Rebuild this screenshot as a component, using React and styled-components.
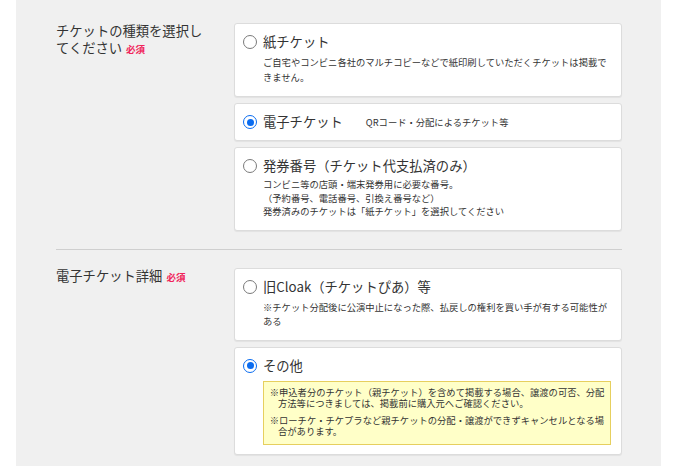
import React from "react";
import styled, { createGlobalStyle } from "styled-components";

const Global = createGlobalStyle`
  html, body { margin: 0; padding: 0; background: #fff; }
  body {
    font-family: "Noto Sans CJK JP", "Noto Sans", sans-serif;
    color: #333;
  }
`;

const Page = styled.div`
  display: flex;
  min-height: 466px;
  background: #fff;
`;

const Panel = styled.div`
  margin-left: 16px;
  width: 645px;
  min-height: 466px;
  background: #f0f0f0;
  box-sizing: border-box;
  padding: 23px 39px 0 40px;
`;

const Section = styled.section`
  display: grid;
  grid-template-columns: 178px 388px;
  align-items: start;
`;

const Label = styled.div`
  width: 150px;
  font-size: 13.3px;
  line-height: 16.6px;
  color: #333;
`;

const Required = styled.span`
  display: inline-block;
  margin-left: 4px;
  font-size: 9.5px;
  line-height: 10px;
  font-weight: 700;
  color: #f0245a;
  vertical-align: 0px;
`;

const Options = styled.div`
  display: flex;
  flex-direction: column;
  gap: 6px;
`;

const Card = styled.label`
  display: block;
  box-sizing: border-box;
  background: #fff;
  border: 1px solid #dcdcdc;
  border-radius: 3px;
  box-shadow: 0 1px 1px rgba(0, 0, 0, 0.06);
  padding: 9px 10px ${(p) => (p.$compact ? "9px" : "11px")} 8px;
`;

const TitleRow = styled.div`
  display: flex;
  align-items: center;
  height: 18px;
`;

const Radio = styled.span`
  flex: none;
  box-sizing: border-box;
  width: 14px;
  height: 14px;
  border-radius: 50%;
  border: ${(p) => (p.$checked ? "1.6px solid #0a6cf0" : "1.3px solid #7a7a7a")};
  background: #fff;
  margin-right: 6px;
  display: flex;
  align-items: center;
  justify-content: center;
  &::after {
    content: "";
    display: ${(p) => (p.$checked ? "block" : "none")};
    width: 7px;
    height: 7px;
    border-radius: 50%;
    background: #0a6cf0;
  }
`;

const Title = styled.span`
  font-size: 13.3px;
  line-height: 18px;
  color: #333;
  white-space: nowrap;
`;

const Note = styled.span`
  margin-left: 23px;
  font-size: 9.3px;
  color: #333;
  white-space: nowrap;
`;

const Desc = styled.div`
  margin: ${(p) => p.$mt || 4}px 0 0 20px;
  font-size: 9.3px;
  line-height: ${(p) => p.$lh || 15}px;
  color: #333;
`;

const Notice = styled.div`
  margin: 6px 0 0 19.7px;
  box-sizing: border-box;
  background: #ffffc8;
  border: 1px solid #e6cf5e;
  padding: 5px 4px 6.5px 6px;
  display: flex;
  flex-direction: column;
  gap: 5.7px;
`;

const NoticeLine = styled.p`
  margin: 0;
  padding-left: 8.3px;
  text-indent: -8.3px;
  font-size: 9.3px;
  line-height: 11.3px;
  color: #333;
`;

const Divider = styled.hr`
  margin: 18px 0;
  border: none;
  border-top: 1px solid #cfcfcf;
  width: 566px;
`;

function Option({ checked, title, note, children, compact }) {
  return (
    <Card $compact={compact}>
      <TitleRow>
        <Radio $checked={checked} />
        <Title>{title}</Title>
        {note && <Note>{note}</Note>}
      </TitleRow>
      {children}
    </Card>
  );
}

export default function App() {
  return (
    <>
      <Global />
      <Page>
        <Panel>
          <Section>
            <Label>
              チケットの種類を選択してください<Required>必須</Required>
            </Label>
            <Options>
              <Option title="紙チケット">
                <Desc>
                  ご自宅やコンビニ各社のマルチコピーなどで紙印刷していただくチケットは掲載できません。
                </Desc>
              </Option>
              <Option checked compact title="電子チケット" note="QRコード・分配によるチケット等" />
              <Option title="発券番号（チケット代支払済のみ）">
                <Desc $mt={3} $lh={13.5}>
                  コンビニ等の店頭・端末発券用に必要な番号。
                  <br />
                  （予約番号、電話番号、引換え番号など）
                  <br />
                  発券済みのチケットは「紙チケット」を選択してください
                </Desc>
              </Option>
            </Options>
          </Section>
          <Divider />
          <Section>
            <Label>
              電子チケット詳細<Required>必須</Required>
            </Label>
            <Options>
              <Option title="旧Cloak（チケットぴあ）等">
                <Desc $lh={14.5}>
                  ※チケット分配後に公演中止になった際、払戻しの権利を買い手が有する可能性がある
                </Desc>
              </Option>
              <Option checked title="その他" compact>
                <Notice>
                  <NoticeLine>
                    ※申込者分のチケット（親チケット）を含めて掲載する場合、譲渡の可否、分配方法等につきましては、掲載前に購入元へご確認ください。
                  </NoticeLine>
                  <NoticeLine>
                    ※ローチケ・チケプラなど親チケットの分配・譲渡ができずキャンセルとなる場合があります。
                  </NoticeLine>
                </Notice>
              </Option>
            </Options>
          </Section>
        </Panel>
      </Page>
    </>
  );
}
